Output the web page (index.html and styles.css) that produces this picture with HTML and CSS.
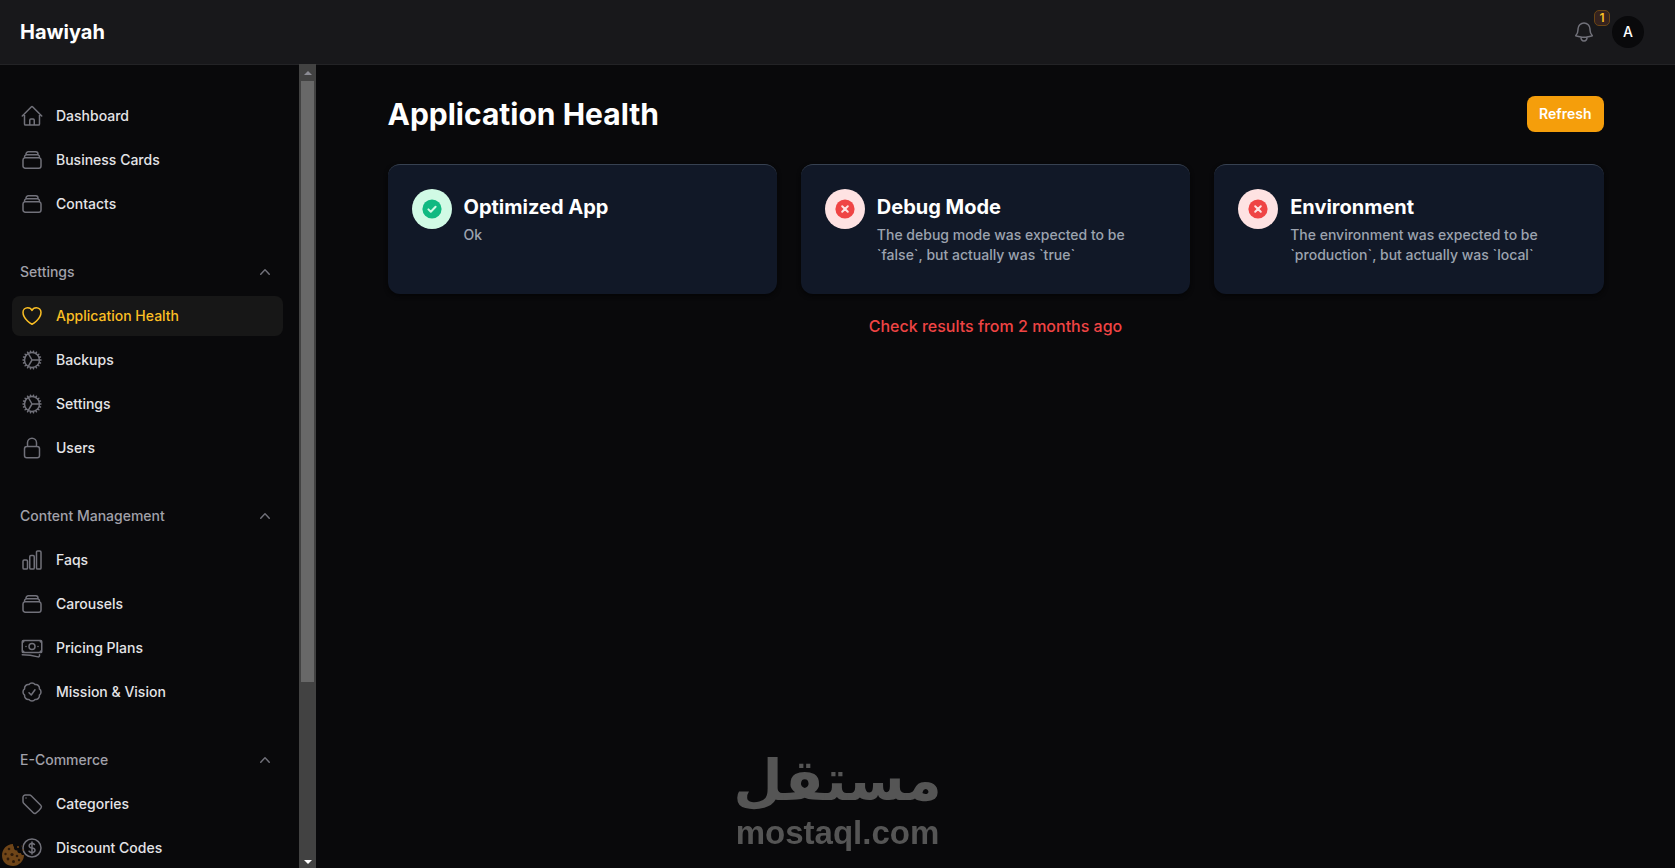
FILE: index.html
```html
<!DOCTYPE html>
<html lang="en">
<head>
<meta charset="utf-8">
<title>Application Health - Hawiyah</title>
<link rel="stylesheet" href="styles.css">
</head>
<body>
<svg class="sprite" aria-hidden="true">
  <symbol id="home" viewBox="0 0 24 24"><path d="m2.25 12 8.954-8.955c.44-.439 1.152-.439 1.591 0L21.75 12M4.5 9.75v10.125c0 .621.504 1.125 1.125 1.125H9.75v-4.875c0-.621.504-1.125 1.125-1.125h2.25c.621 0 1.125.504 1.125 1.125V21h4.125c.621 0 1.125-.504 1.125-1.125V9.75M8.25 21h8.25"/></symbol>
  <symbol id="stack" viewBox="0 0 24 24"><path d="M6 6.878V6a2.25 2.25 0 0 1 2.25-2.25h7.5A2.25 2.25 0 0 1 18 6v.878m-12 0c.235-.083.487-.128.75-.128h10.5c.263 0 .515.045.75.128m-12 0A2.25 2.25 0 0 0 4.5 9v.878m13.5-3A2.25 2.25 0 0 1 19.5 9v.878m0 0a2.246 2.246 0 0 0-.75-.128H5.25c-.263 0-.515.045-.75.128m15 0A2.25 2.25 0 0 1 21 12v6a2.25 2.25 0 0 1-2.25 2.25H5.25A2.25 2.25 0 0 1 3 18v-6c0-.98.626-1.813 1.5-2.122"/></symbol>
  <symbol id="heart" viewBox="0 0 24 24"><path d="M21 8.25c0-2.485-2.099-4.5-4.688-4.5-1.935 0-3.597 1.126-4.312 2.733-.715-1.607-2.377-2.733-4.313-2.733C5.1 3.75 3 5.765 3 8.25c0 7.22 9 12 9 12s9-4.78 9-12Z"/></symbol>
  <symbol id="cog" viewBox="0 0 24 24"><path d="M4.5 12a7.5 7.5 0 0 0 15 0m-15 0a7.5 7.5 0 1 1 15 0m-15 0H3m16.5 0H21m-1.5 0H12m-8.457 3.077 1.41-.513m14.095-5.13 1.41-.513M5.106 17.785l1.15-.964m11.49-9.642 1.149-.964M7.501 19.795l.75-1.3m7.5-12.99.75-1.3m-6.063 16.658.26-1.477m2.605-14.772.26-1.477m0 17.726-.26-1.477M10.698 4.614l-.26-1.477M16.5 19.794l-.75-1.299M7.5 4.205 12 12m6.894 5.785-1.149-.964M6.256 7.178l-1.15-.964m15.352 8.864-1.41-.513M4.954 9.435l-1.41-.514M12.002 12l-3.75 6.495"/></symbol>
  <symbol id="lock" viewBox="0 0 24 24"><path d="M16.5 10.5V6.75a4.5 4.5 0 1 0-9 0v3.75m-.75 11.25h10.5a2.25 2.25 0 0 0 2.25-2.25v-6.75a2.25 2.25 0 0 0-2.25-2.25H6.75a2.25 2.25 0 0 0-2.25 2.25v6.75a2.25 2.25 0 0 0 2.25 2.25Z"/></symbol>
  <symbol id="chart" viewBox="0 0 24 24"><path d="M3 13.125C3 12.504 3.504 12 4.125 12h2.25c.621 0 1.125.504 1.125 1.125v6.75C7.5 20.496 6.996 21 6.375 21h-2.25A1.125 1.125 0 0 1 3 19.875v-6.75ZM9.75 8.625c0-.621.504-1.125 1.125-1.125h2.25c.621 0 1.125.504 1.125 1.125v11.25c0 .621-.504 1.125-1.125 1.125h-2.25a1.125 1.125 0 0 1-1.125-1.125V8.625ZM16.5 4.125c0-.621.504-1.125 1.125-1.125h2.25C20.496 3 21 3.504 21 4.125v15.75c0 .621-.504 1.125-1.125 1.125h-2.25a1.125 1.125 0 0 1-1.125-1.125V4.125Z"/></symbol>
  <symbol id="banknotes" viewBox="0 0 24 24"><path d="M2.25 18.75a60.07 60.07 0 0 1 15.797 2.101c.727.198 1.453-.342 1.453-1.096V18.75M3.75 4.5v.75A.75.75 0 0 1 3 6h-.75m0 0v-.375c0-.621.504-1.125 1.125-1.125H20.25M2.25 6v9m18-10.5v.75c0 .414.336.75.75.75h.75m-1.5-1.5h.375c.621 0 1.125.504 1.125 1.125v9.75c0 .621-.504 1.125-1.125 1.125h-.375m1.5-1.5H21a.75.75 0 0 0-.75.75v.75m0 0H3.75m0 0h-.375a1.125 1.125 0 0 1-1.125-1.125V15m1.5 1.5v-.75A.75.75 0 0 0 3 15h-.75M15 10.5a3 3 0 1 1-6 0 3 3 0 0 1 6 0Zm3 0h.008v.008H18V10.5Zm-12 0h.008v.008H6V10.5Z"/></symbol>
  <symbol id="badge" viewBox="0 0 24 24"><path d="M9 12.75 11.25 15 15 9.75M21 12c0 1.268-.63 2.39-1.593 3.068a3.745 3.745 0 0 1-1.043 3.296 3.745 3.745 0 0 1-3.296 1.043A3.745 3.745 0 0 1 12 21c-1.268 0-2.39-.63-3.068-1.593a3.746 3.746 0 0 1-3.296-1.043 3.745 3.745 0 0 1-1.043-3.296A3.745 3.745 0 0 1 3 12c0-1.268.63-2.39 1.593-3.068a3.745 3.745 0 0 1 1.043-3.296 3.746 3.746 0 0 1 3.296-1.043A3.746 3.746 0 0 1 12 3c1.268 0 2.39.63 3.068 1.593a3.746 3.746 0 0 1 3.296 1.043 3.746 3.746 0 0 1 1.043 3.296A3.745 3.745 0 0 1 21 12Z"/></symbol>
  <symbol id="tag" viewBox="0 0 24 24"><path d="M9.568 3H5.25A2.25 2.25 0 0 0 3 5.25v4.318c0 .597.237 1.17.659 1.591l9.581 9.581c.699.699 1.78.872 2.607.33a18.095 18.095 0 0 0 5.223-5.223c.542-.827.369-1.908-.33-2.607L11.16 3.66A2.25 2.25 0 0 0 9.568 3Z"/><path d="M6 6h.008v.008H6V6Z"/></symbol>
  <symbol id="dollar" viewBox="0 0 24 24"><path d="M12 6v12m-3-2.818.879.659c1.171.879 3.07.879 4.242 0 1.172-.879 1.172-2.303 0-3.182C13.536 12.219 12.768 12 12 12c-.725 0-1.45-.22-2.003-.659-1.106-.879-1.106-2.303 0-3.182s2.9-.879 4.006 0l.415.33M21 12a9 9 0 1 1-18 0 9 9 0 0 1 18 0Z"/></symbol>
  <symbol id="bell" viewBox="0 0 24 24"><path d="M14.857 17.082a23.848 23.848 0 0 0 5.454-1.31A8.967 8.967 0 0 1 18 9.75V9A6 6 0 0 0 6 9v.75a8.967 8.967 0 0 1-2.312 6.022c1.733.64 3.56 1.085 5.455 1.31m5.714 0a24.255 24.255 0 0 1-5.714 0m5.714 0a3 3 0 1 1-5.714 0"/></symbol>
  <symbol id="chevron" viewBox="0 0 20 20"><path d="M14.77 12.79a.75.75 0 0 1-1.06-.02L10 8.832 6.29 12.77a.75.75 0 1 1-1.08-1.04l4.25-4.5a.75.75 0 0 1 1.08 0l4.25 4.5a.75.75 0 0 1-.02 1.06Z"/></symbol>
  <symbol id="ok" viewBox="0 0 24 24"><circle cx="12" cy="12" r="9.6"/><path class="mark" d="m8.4 12.4 2.4 2.300 4.800-4.900"/></symbol>
  <symbol id="fail" viewBox="0 0 24 24"><circle cx="12" cy="12" r="9.6"/><path class="mark" d="m9.200 9.200 5.600 5.600m0-5.600-5.600 5.600"/></symbol>
</svg>

<header class="topbar">
  <a class="brand" href="#">Hawiyah</a>
  <div class="topbar-end">
    <button class="bell" type="button" aria-label="Notifications">
      <svg class="icon"><use href="#bell"/></svg>
      <span class="count">1</span>
    </button>
    <button class="avatar" type="button" aria-label="User menu">A</button>
  </div>
</header>

<div class="layout">
  <aside class="sidebar">
    <nav class="nav">
      <ul class="group">
        <li><a class="item" href="#"><svg class="icon"><use href="#home"/></svg>Dashboard</a></li>
        <li><a class="item" href="#"><svg class="icon"><use href="#stack"/></svg>Business Cards</a></li>
        <li><a class="item" href="#"><svg class="icon"><use href="#stack"/></svg>Contacts</a></li>
      </ul>
      <section class="group">
        <button class="group-head" type="button">Settings<svg class="chevron"><use href="#chevron"/></svg></button>
        <ul class="group">
          <li><a class="item active" href="#"><svg class="icon"><use href="#heart"/></svg>Application Health</a></li>
          <li><a class="item" href="#"><svg class="icon"><use href="#cog"/></svg>Backups</a></li>
          <li><a class="item" href="#"><svg class="icon"><use href="#cog"/></svg>Settings</a></li>
          <li><a class="item" href="#"><svg class="icon"><use href="#lock"/></svg>Users</a></li>
        </ul>
      </section>
      <section class="group">
        <button class="group-head" type="button">Content Management<svg class="chevron"><use href="#chevron"/></svg></button>
        <ul class="group">
          <li><a class="item" href="#"><svg class="icon"><use href="#chart"/></svg>Faqs</a></li>
          <li><a class="item" href="#"><svg class="icon"><use href="#stack"/></svg>Carousels</a></li>
          <li><a class="item" href="#"><svg class="icon"><use href="#banknotes"/></svg>Pricing Plans</a></li>
          <li><a class="item" href="#"><svg class="icon"><use href="#badge"/></svg>Mission &amp; Vision</a></li>
        </ul>
      </section>
      <section class="group">
        <button class="group-head" type="button">E-Commerce<svg class="chevron"><use href="#chevron"/></svg></button>
        <ul class="group">
          <li><a class="item" href="#"><svg class="icon"><use href="#tag"/></svg>Categories</a></li>
          <li><a class="item" href="#"><svg class="icon"><use href="#dollar"/></svg>Discount Codes</a></li>
        </ul>
      </section>
    </nav>
    <div class="scrollbar" aria-hidden="true">
      <span class="arrow up"></span>
      <span class="track"><span class="thumb"></span></span>
      <span class="arrow down"></span>
    </div>
  </aside>

  <main class="main">
    <div class="page-head">
      <h1 class="title">Application Health</h1>
      <button class="refresh" type="button">Refresh</button>
    </div>
    <div class="cards">
      <article class="card">
        <span class="status ok"><svg class="status-icon"><use href="#ok"/></svg></span>
        <div class="card-body">
          <h2 class="card-title">Optimized App</h2>
          <p class="card-text">Ok</p>
        </div>
      </article>
      <article class="card">
        <span class="status fail"><svg class="status-icon"><use href="#fail"/></svg></span>
        <div class="card-body">
          <h2 class="card-title">Debug Mode</h2>
          <p class="card-text">The debug mode was expected to be `false`, but actually was `true`</p>
        </div>
      </article>
      <article class="card">
        <span class="status fail"><svg class="status-icon"><use href="#fail"/></svg></span>
        <div class="card-body">
          <h2 class="card-title">Environment</h2>
          <p class="card-text">The environment was expected to be `production`, but actually was `local`</p>
        </div>
      </article>
    </div>
    <p class="stale">Check results from 2 months ago</p>
  </main>
</div>

<div class="watermark">
  <span class="wm-ar" lang="ar" dir="rtl">مستقل</span>
  <span class="wm-en">mostaql.com</span>
</div>

<button class="cookie" type="button" aria-label="Cookie settings">
  <svg class="cookie-icon" viewBox="0 0 24 24">
    <path class="dough" d="M12 1c-6 0-11 5-11 11.500S6 23 12 23s11-5 11-11c-2 .4-3-.6-3-2-2 .6-4-.6-3.600-2.600-2.400.2-4-1.400-3.400-3.400C12 3 12 2 12 1Z"/>
    <circle class="dough" cx="17" cy="4" r="1"/><circle class="dough" cx="21" cy="3" r=".6"/><circle class="dough" cx="22" cy="7" r=".8"/>
    <g class="chips"><circle cx="8" cy="6" r="1.300"/><circle cx="4.500" cy="11" r="1.200"/><circle cx="11" cy="11.500" r="1.600"/><circle cx="7" cy="16" r="1.400"/><circle cx="16" cy="13" r="1.300"/><circle cx="12.500" cy="18.500" r="1.500"/><circle cx="18" cy="17" r="1.200"/></g>
  </svg>
</button>
</body>
</html>
```

FILE: styles.css
```css
*, *::before, *::after { box-sizing: border-box; }

body {
  margin: 0;
  height: 100vh;
  display: flex;
  flex-direction: column;
  overflow: hidden;
  background: #09090b;
  color: #fff;
  font-family: Inter, "Liberation Sans", sans-serif;
  font-size: 14px;
  line-height: 20px;
}

h1, h2, p, ul { margin: 0; padding: 0; }
ul { list-style: none; }
a { color: inherit; text-decoration: none; }
button {
  margin: 0;
  padding: 0;
  border: 0;
  background: none;
  color: inherit;
  font: inherit;
  cursor: pointer;
}

.sprite { position: absolute; width: 0; height: 0; }

.icon {
  flex: none;
  width: 24px;
  height: 24px;
  fill: none;
  stroke: #71717a;
  stroke-width: 1.5;
  stroke-linecap: round;
  stroke-linejoin: round;
}

/* Top bar */
.topbar {
  flex: none;
  height: 65px;
  padding: 0 31px 0 20px;
  display: flex;
  align-items: center;
  justify-content: space-between;
  background: #18181b;
  border-bottom: 1px solid #232326;
}
.brand { font-size: 20px; line-height: 28px; font-weight: 700; }
.topbar-end { display: flex; align-items: center; gap: 16px; }
.bell { position: relative; display: flex; }
.count {
  position: absolute;
  left: 22px;
  top: -10px;
  width: 16px;
  height: 16px;
  border: 1px solid #6b4615;
  border-radius: 5px;
  background: #35231f;
  color: #fbbf24;
  font-size: 12px;
  line-height: 14px;
  font-weight: 600;
  text-align: center;
}
.avatar {
  width: 32px;
  height: 32px;
  border-radius: 50%;
  background: #09090b;
  font-weight: 500;
}

/* Sidebar */
.layout { flex: 1; min-height: 0; display: flex; }
.sidebar { flex: none; width: 316px; display: flex; margin-top: -1px; }
.nav {
  flex: 1;
  padding: 32px 16px 0 12px;
  display: flex;
  flex-direction: column;
  gap: 28px;
  overflow: hidden;
}
.group { display: flex; flex-direction: column; gap: 4px; }
.item, .group-head {
  width: 100%;
  height: 40px;
  padding: 0 8px;
  display: flex;
  align-items: center;
  gap: 12px;
  border-radius: 8px;
  font-weight: 500;
  color: #e4e4e7;
}
.group-head { justify-content: space-between; color: #a1a1aa; }
.chevron { width: 20px; height: 20px; fill: #71717a; }
.active { background: #171717; color: #fbbf24; }
.active .icon { stroke: #fbbf24; }

.scrollbar {
  flex: none;
  width: 17px;
  display: flex;
  flex-direction: column;
  background: #424242;
}
.arrow { height: 17px; display: flex; align-items: center; justify-content: center; }
.arrow::before {
  content: "";
  border: 4px solid transparent;
}
.up::before { border-top: 0; border-bottom-color: #8b8b93; }
.down { padding-top: 4px; }
.down::before { border-bottom: 0; border-top-color: #fff; }
.track { flex: 1; padding: 0 2px; }
.thumb { display: block; height: 78%; background: #686868; }

/* Page */
.main {
  flex: 1;
  max-width: 1280px;
  margin: 0 auto;
  padding: 31px 32px;
}
.page-head {
  display: flex;
  align-items: center;
  justify-content: space-between;
  margin-bottom: 32px;
}
.title { font-size: 30px; line-height: 36px; font-weight: 700; }
.refresh {
  height: 36px;
  padding: 0 12px;
  border-radius: 8px;
  background: #f59e0b;
  font-weight: 600;
}
.cards { display: grid; grid-template-columns: repeat(3, 1fr); gap: 24px; }
.card {
  min-height: 130px;
  padding: 24px;
  display: flex;
  align-items: flex-start;
  gap: 12px;
  border-top: 1px solid #374151;
  border-radius: 12px;
  background: #111827;
  box-shadow: 0 2px 4px #050506;
}
.status {
  flex: none;
  width: 40px;
  height: 40px;
  display: flex;
  align-items: center;
  justify-content: center;
  border-radius: 50%;
}
.ok { background: #d1fae5; fill: #10b981; stroke: #d1fae5; }
.fail { background: #fee2e2; fill: #ef4444; stroke: #fee2e2; }
.status-icon { width: 24px; height: 24px; }
circle { stroke: none; }
.mark { fill: none; stroke-width: 2; stroke-linecap: round; stroke-linejoin: round; }
.card-body { padding-top: 4px; }
.card-title { font-size: 20px; line-height: 28px; font-weight: 700; }
.card-text { margin-top: 4px; color: #9ca3af; font-weight: 500; }
.stale {
  margin-top: 20px;
  font-size: 16px;
  line-height: 24px;
  font-weight: 500;
  text-align: center;
  color: #ef4444;
}

/* Overlays */
.watermark {
  position: fixed;
  right: 0;
  bottom: 16px;
  left: 0;
  display: flex;
  flex-direction: column;
  align-items: center;
  color: #555;
  font-weight: 700;
  pointer-events: none;
}
.wm-ar { font-family: "DejaVu Sans", sans-serif; font-size: 57px; line-height: 68px; }
.wm-en { font-family: "Liberation Sans", Arial, sans-serif; font-size: 33px; line-height: 38px; }
.cookie { position: fixed; left: 1px; bottom: 1px; }
.cookie-icon { display: block; width: 24px; height: 24px; }
.dough { fill: #6f4518; }
.chips { fill: #2e1a0a; }
```
